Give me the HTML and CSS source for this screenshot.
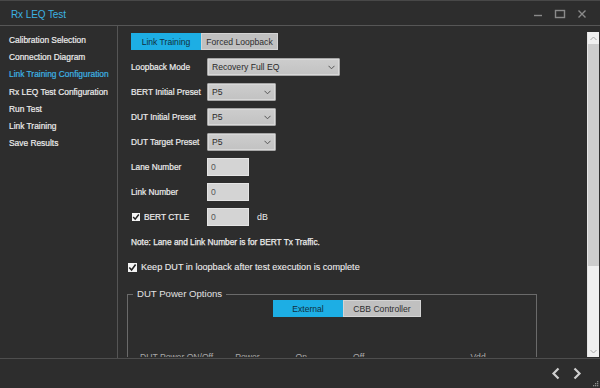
FILE: index.html
```html
<!DOCTYPE html>
<html>
<head>
<meta charset="utf-8">
<link rel="stylesheet" href="styles.css">
</head>
<body>
<div class="window">
  <header class="titlebar">
    <span class="title">Rx LEQ Test</span>
    <div class="controls">
      <svg class="ctl" width="12" height="12" viewBox="0 0 12 12"><line x1="2" y1="7.5" x2="10" y2="7.5" stroke="#8a8a8a" stroke-width="1.4"/></svg>
      <svg class="ctl" width="12" height="12" viewBox="0 0 12 12"><rect x="1.5" y="2.5" width="9" height="7" fill="none" stroke="#8a8a8a" stroke-width="1.4"/></svg>
      <svg class="ctl" width="12" height="12" viewBox="0 0 12 12"><path d="M2.5 2.5 L9.5 9.5 M9.5 2.5 L2.5 9.5" stroke="#8a8a8a" stroke-width="1.4"/></svg>
    </div>
  </header>
  <div class="main">
    <nav class="sidebar">
      <a class="nav-item">Calibration Selection</a>
      <a class="nav-item">Connection Diagram</a>
      <a class="nav-item active">Link Training Configuration</a>
      <a class="nav-item">Rx LEQ Test Configuration</a>
      <a class="nav-item">Run Test</a>
      <a class="nav-item">Link Training</a>
      <a class="nav-item">Save Results</a>
    </nav>
    <section class="content">
      <div class="scroll-area">
        <div class="toggle">
          <span class="tbtn on w70">Link Training</span>
          <span class="tbtn off w77">Forced Loopback</span>
        </div>
        <div class="form">
          <label class="lbl">Loopback Mode</label>
          <div class="select wide"><span>Recovery Full EQ</span><svg width="7" height="5" viewBox="0 0 7 5"><polyline points="0.5,0.8 3.5,3.8 6.5,0.8" fill="none" stroke="#555" stroke-width="1"/></svg></div>
          <label class="lbl">BERT Initial Preset</label>
          <div class="select"><span>P5</span><svg width="7" height="5" viewBox="0 0 7 5"><polyline points="0.5,0.8 3.5,3.8 6.5,0.8" fill="none" stroke="#555" stroke-width="1"/></svg></div>
          <label class="lbl">DUT Initial Preset</label>
          <div class="select"><span>P5</span><svg width="7" height="5" viewBox="0 0 7 5"><polyline points="0.5,0.8 3.5,3.8 6.5,0.8" fill="none" stroke="#555" stroke-width="1"/></svg></div>
          <label class="lbl">DUT Target Preset</label>
          <div class="select"><span>P5</span><svg width="7" height="5" viewBox="0 0 7 5"><polyline points="0.5,0.8 3.5,3.8 6.5,0.8" fill="none" stroke="#555" stroke-width="1"/></svg></div>
          <label class="lbl">Lane Number</label>
          <div class="input">0</div>
          <label class="lbl">Link Number</label>
          <div class="input">0</div>
          <label class="lbl check-lbl"><span class="cb"><svg width="8" height="8" viewBox="0 0 8 8"><polyline points="1.2,4 3.2,6.2 6.8,1.5" fill="none" stroke="#222" stroke-width="1.5"/></svg></span>BERT CTLE</label>
          <div class="with-unit"><div class="input">0</div><span class="unit">dB</span></div>
        </div>
        <p class="note">Note: Lane and Link Number is for BERT Tx Traffic.</p>
        <label class="keep"><span class="cb big"><svg width="9" height="9" viewBox="0 0 9 9"><polyline points="1.3,4.5 3.6,7 7.6,1.6" fill="none" stroke="#222" stroke-width="1.6"/></svg></span>Keep DUT in loopback after test execution is complete</label>
        <fieldset class="group">
          <legend>DUT Power Options</legend>
          <div class="toggle center">
            <span class="tbtn on w70">External</span>
            <span class="tbtn off w78">CBB Controller</span>
          </div>
          <div class="power-row">
            <span class="pw-lbl">DUT Power ON/Off</span>
            <span class="pw-a">Power</span>
            <span class="pw-b">On</span>
            <span class="pw-c">Off</span>
            <span class="pw-d">Vdd</span>
          </div>
        </fieldset>
      </div>
      <div class="scrollbar">
        <div class="sb-btn"><svg width="7" height="5" viewBox="0 0 7 5"><polyline points="0.5,4 3.5,1 6.5,4" fill="none" stroke="#a8a8a8" stroke-width="1"/></svg></div>
        <div class="sb-thumb"></div>
        <div class="sb-track"></div>
        <div class="sb-btn down"><svg width="7" height="5" viewBox="0 0 7 5"><polyline points="0.5,1 3.5,4 6.5,1" fill="none" stroke="#a8a8a8" stroke-width="1"/></svg></div>
      </div>
    </section>
  </div>
  <footer class="bottombar">
    <svg class="nav-arrow" width="10" height="13" viewBox="0 0 10 13"><polyline points="7.5,1.5 2.5,6.5 7.5,11.5" fill="none" stroke="#cfcfcf" stroke-width="2.2"/></svg>
    <svg class="nav-arrow" width="10" height="13" viewBox="0 0 10 13"><polyline points="2.5,1.5 7.5,6.5 2.5,11.5" fill="none" stroke="#cfcfcf" stroke-width="2.2"/></svg>
    <svg class="grip" width="6" height="6" viewBox="0 0 6 6" fill="#8c8c8c"><rect x="4" y="0" width="1.3" height="1.3"/><rect x="2" y="2" width="1.3" height="1.3"/><rect x="4" y="2" width="1.3" height="1.3"/><rect x="0" y="4" width="1.3" height="1.3"/><rect x="2" y="4" width="1.3" height="1.3"/><rect x="4" y="4" width="1.3" height="1.3"/></svg>
  </footer>
</div>
</body>
</html>
```
FILE: styles.css
```css
* { box-sizing: border-box; }
html, body { margin: 0; padding: 0; }
body {
  width: 600px;
  height: 388px;
  background: #2d2d2d;
  font-family: "Liberation Sans", Arial, sans-serif;
  color: #e6e6e6;
  overflow: hidden;
}
.window {
  width: 600px;
  height: 388px;
  display: flex;
  flex-direction: column;
  background: #2d2d2d;
  position: relative;
}
.titlebar {
  height: 26px;
  flex: none;
  border-top: 1px solid #484848;
  border-bottom: 1px solid #565656;
  display: flex;
  align-items: center;
  justify-content: space-between;
  padding: 0 12px 0 11px;
}
.title {
  font-size: 10px;
  color: #3cb2e2;
  letter-spacing: -0.1px;
  padding-top: 2px;
}
.controls {
  display: flex;
  gap: 10px;
  padding-top: 1px;
}
.ctl { display: block; }
.main {
  height: 332px;
  flex: none;
  display: flex;
}
.sidebar {
  width: 118px;
  flex: none;
  border-right: 1px solid #555;
  display: flex;
  flex-direction: column;
  padding: 8px 0 0 9px;
}
.nav-item {
  font-size: 8.4px;
  height: 17.2px;
  line-height: 12px;
  color: #ececec;
  -webkit-text-stroke: 0.2px #ececec;
  white-space: nowrap;
}
.nav-item.active {
  color: #3db3e3;
  -webkit-text-stroke: 0.2px #3db3e3;
}
.content {
  flex: 1;
  display: flex;
  padding-top: 6px;
  padding-bottom: 1px;
  min-width: 0;
}
.scroll-area {
  flex: 1;
  overflow: hidden;
  padding: 1px 0 0 13px;
  font-size: 8.3px;
  min-width: 0;
}
.toggle {
  display: flex;
  height: 17px;
}
.toggle.center {
  margin-left: 145px;
  margin-top: 1px;
}
.tbtn {
  display: flex;
  align-items: center;
  justify-content: center;
  font-size: 8.6px;
  height: 17px;
}
.tbtn.on {
  background: #1daee4;
  color: #103040;
}
.tbtn.off {
  background: #c0c0c0;
  color: #2e2e2e;
  border: 1px solid #d4d4d4;
}
.w70 { width: 70px; }
.w77 { width: 77px; }
.w78 { width: 78px; }
.form {
  display: grid;
  grid-template-columns: 76px auto;
  grid-auto-rows: 18px;
  row-gap: 7px;
  margin-top: 8px;
  align-items: center;
  justify-items: start;
}
.lbl {
  color: #ececec;
  -webkit-text-stroke: 0.2px #ececec;
  white-space: nowrap;
  display: flex;
  align-items: center;
}
.select {
  width: 69px;
  height: 18px;
  background: linear-gradient(#cdcdcd, #c2c2c2);
  border: 1px solid #a6a6a6;
  box-shadow: inset 0 0 0 1px #d8d8d8;
  border-radius: 1px;
  display: flex;
  align-items: center;
  justify-content: space-between;
  padding: 0 4px 0 4px;
  color: #2a2a2a;
  font-size: 8.6px;
}
.select.wide { width: 133px; }
.input {
  width: 42px;
  height: 18px;
  background: #d4d4d4;
  border: 1px solid #e4e4e4;
  color: #555;
  font-size: 8.6px;
  display: flex;
  align-items: center;
  padding-left: 3px;
}
.check-lbl { margin-left: 1px; }
.cb {
  width: 8px;
  height: 8px;
  background: #f4f4f4;
  display: inline-flex;
  align-items: center;
  justify-content: center;
  margin-right: 4px;
}
.cb.big { width: 9px; height: 9px; }
.with-unit {
  display: flex;
  align-items: center;
}
.unit {
  margin-left: 8px;
  color: #ececec;
  font-size: 8.8px;
}
.note {
  margin: 10px 0 0 0;
  height: 12px;
  line-height: 12px;
  color: #ececec;
  -webkit-text-stroke: 0.25px #ececec;
}
.keep {
  display: flex;
  align-items: center;
  margin: 14px 0 0 -3px;
  color: #ececec;
  font-size: 9.1px;
  -webkit-text-stroke: 0.1px #ececec;
}
.group {
  margin: 17px 0 0 -4px;
  width: 410px;
  border: 1px solid #6a6a6a;
  border-bottom: none;
  padding: 0;
  height: 120px;
}
.group legend {
  margin-left: 5px;
  padding: 0 4px;
  font-size: 9.6px;
  color: #e2e2e2;
  line-height: 10px;
}
.power-row {
  display: flex;
  margin-top: 35px;
  padding-left: 12px;
  font-size: 8.6px;
  line-height: 10px;
  color: #a8a8a8;
  white-space: nowrap;
}
.pw-a { margin-left: 22px; }
.pw-b { margin-left: 36px; }
.pw-c { margin-left: 46px; }
.pw-d { margin-left: 106px; }
.scrollbar {
  width: 12px;
  flex: none;
  margin-right: 1px;
  display: flex;
  flex-direction: column;
  background: #f0f0f0;
  border-left: 1px solid #e6e6e6;
}
.sb-btn {
  height: 12px;
  flex: none;
  display: flex;
  align-items: center;
  justify-content: center;
  background: #f0f0f0;
}
.sb-thumb {
  height: 222px;
  flex: none;
  background: #cdcdcd;
}
.sb-track { flex: 1; background: #f0f0f0; }
.bottombar {
  flex: 1;
  border-top: 1px solid #4e4e4e;
  display: flex;
  align-items: center;
  justify-content: flex-end;
  gap: 11px;
  padding: 0 18px 0 0;
  position: relative;
}
.nav-arrow { display: block; }
.grip {
  position: absolute;
  right: 1px;
  bottom: 1px;
}
```
